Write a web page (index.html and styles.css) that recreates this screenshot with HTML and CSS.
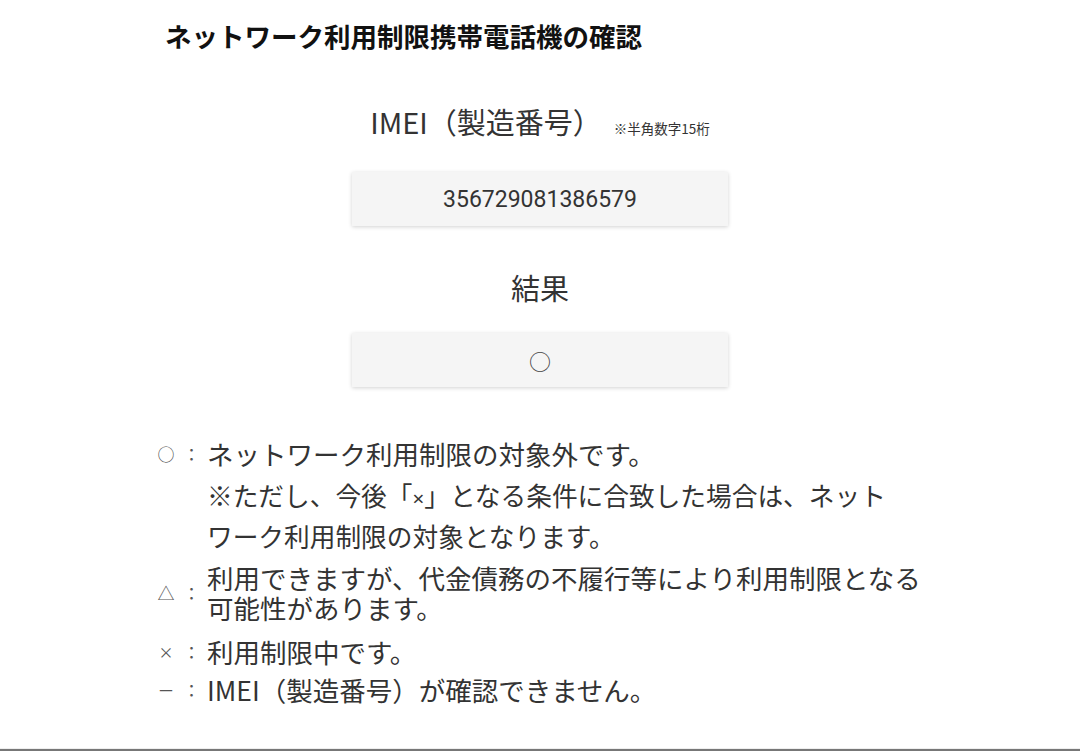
FILE: index.html
```html
<!DOCTYPE html>
<html lang="ja">
<head>
<meta charset="utf-8">
<title>ネットワーク利用制限携帯電話機の確認</title>
<link rel="stylesheet" href="styles.css">
</head>
<body>
<div class="page">
  <h1 class="title">ネットワーク利用制限携帯電話機の確認</h1>

  <section class="check">
    <div class="label-row">
      <span class="label">IMEI（製造番号）</span><span class="note">※半角数字15桁</span>
    </div>
    <div class="field">356729081386579</div>

    <div class="label-row result-label">
      <span class="label">結果</span>
    </div>
    <div class="field field-result"><span class="mark">○</span></div>
  </section>

  <div class="legend">
    <div class="row row-first">
      <span class="sym">○</span><span class="colon">：</span>
      <span class="desc">ネットワーク利用制限の対象外です。</span>
    </div>
    <div class="row row-note">
      <span class="sym"></span><span class="colon"></span>
      <span class="desc">※ただし、今後「<span class="cross">×</span>」となる条件に合致した場合は、ネット<br>ワーク利用制限の対象となります。</span>
    </div>
    <div class="row row-tri">
      <span class="sym">△</span><span class="colon">：</span>
      <span class="desc">利用できますが、代金債務の不履行等により利用制限となる<br>可能性があります。</span>
    </div>
    <div class="row row-x">
      <span class="sym sym-small">×</span><span class="colon">：</span>
      <span class="desc">利用制限中です。</span>
    </div>
    <div class="row row-dash">
      <span class="sym sym-dash">－</span><span class="colon">：</span>
      <span class="desc">IMEI（製造番号）が確認できません。</span>
    </div>
  </div>
</div>
</body>
</html>
```

FILE: styles.css
```css
html, body {
  margin: 0;
  padding: 0;
  background: #ffffff;
}

body {
  font-family: "Noto Sans CJK JP", "Noto Sans", sans-serif;
  color: #333333;
}

.page {
  height: 751px;
  box-sizing: border-box;
  border-bottom: 2px solid #777777;
  box-shadow: inset 0 -1px 0 #eeeeee;
  overflow: hidden;
}

.title {
  margin: 0;
  padding: 18px 0 0 165px;
  font-size: 26.5px;
  line-height: 36px;
  font-weight: 700;
  color: #111111;
}

.check {
  display: flex;
  flex-direction: column;
  align-items: center;
}

.label-row {
  margin-top: 47px;
  display: flex;
  align-items: baseline;
  justify-content: center;
  line-height: 40px;
}

.label {
  font-size: 29px;
  font-weight: 400;
  color: #333333;
}

.note {
  font-size: 13.5px;
  margin-left: 12px;
  color: #333333;
}

.field {
  margin-top: 24px;
  width: 376px;
  height: 54px;
  box-sizing: border-box;
  background: #f5f5f5;
  box-shadow: 0 1px 4px rgba(0, 0, 0, 0.18);
  display: flex;
  align-items: center;
  justify-content: center;
  font-family: "Roboto", "Noto Sans CJK JP", sans-serif;
  font-size: 23px;
  color: #333333;
}

.result-label {
  margin-top: 41px;
}

.field-result {
  margin-top: 26px;
}

.mark {
  font-family: "Noto Sans CJK JP", sans-serif;
  font-size: 22px;
  color: #444444;
}

.legend {
  margin-left: 156px;
  margin-top: 48px;
}

.row {
  display: flex;
  align-items: center;
  font-size: 26.5px;
  line-height: 38px;
  color: #333333;
}

.sym {
  width: 20px;
  flex: none;
  text-align: center;
  font-size: 17px;
  color: #555555;
}

.sym-small {
  font-size: 15px;
}

.sym-dash {
  font-size: 17px;
}

.colon {
  width: 31px;
  flex: none;
  text-align: center;
  font-size: 17px;
  color: #555555;
}

.desc {
  flex: none;
}

.cross {
  font-family: "Noto Sans", "DejaVu Sans", sans-serif;
  font-size: 0.8em;
}

.row-note {
  margin-top: 3px;
  font-size: 25.7px;
  line-height: 37px;
}

.row-tri {
  margin-top: 9px;
  line-height: 30px;
}

.row-x {
  margin-top: 10px;
}

.row-dash {
  margin-top: 0;
}
```
